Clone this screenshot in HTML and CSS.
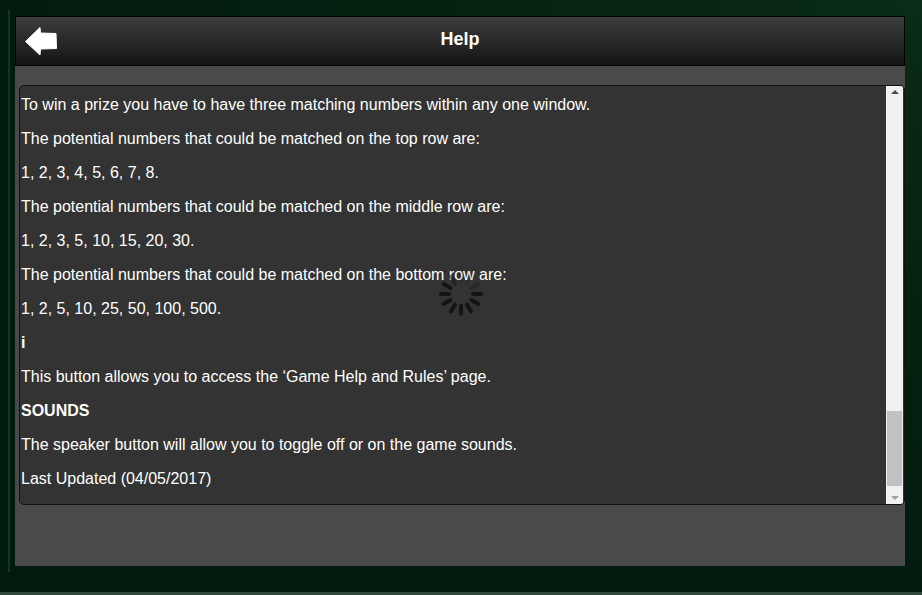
FILE: index.html
```html
<!DOCTYPE html>
<html>
<head>
<meta charset="utf-8">
<link rel="stylesheet" href="styles.css">
</head>
<body>
<div class="frame">
  <div class="edge-line"></div>
  <div class="panel">
    <header class="topbar">
      <button class="back" aria-label="Back">
        <svg width="32" height="29" viewBox="0 0 32 29"><path d="M0.5 14.5 L15 0.5 L15.5 6 L31 6.5 L31.5 21.5 L15.5 22 L15 28 Z" fill="#fff" stroke="#fff" stroke-width="1" stroke-linejoin="round"/></svg>
      </button>
      <h1 class="title">Help</h1>
    </header>
    <div class="body">
      <div class="content">
        <div class="text">
          <p>To win a prize you have to have three matching numbers within any one window.</p>
          <p>The potential numbers that could be matched on the top row are:</p>
          <p>1, 2, 3, 4, 5, 6, 7, 8.</p>
          <p>The potential numbers that could be matched on the middle row are:</p>
          <p>1, 2, 3, 5, 10, 15, 20, 30.</p>
          <p>The potential numbers that could be matched on the bottom row are:</p>
          <p>1, 2, 5, 10, 25, 50, 100, 500.</p>
          <p><b>i</b></p>
          <p>This button allows you to access the ‘Game Help and Rules’ page.</p>
          <p><b>SOUNDS</b></p>
          <p>The speaker button will allow you to toggle off or on the game sounds.</p>
          <p>Last Updated (04/05/2017)</p>
        </div>
        <div class="scrollbar">
          <div class="arrow up"></div>
          <div class="track"><div class="thumb"></div></div>
          <div class="arrow down"></div>
        </div>
        <div class="spinner">
          <i style="transform:rotate(0deg);opacity:.15"></i>
          <i style="transform:rotate(30deg);opacity:.15"></i>
          <i style="transform:rotate(60deg);opacity:.25"></i>
          <i style="transform:rotate(90deg);opacity:.9"></i>
          <i style="transform:rotate(120deg);opacity:.9"></i>
          <i style="transform:rotate(150deg);opacity:.9"></i>
          <i style="transform:rotate(180deg);opacity:.9"></i>
          <i style="transform:rotate(210deg);opacity:.9"></i>
          <i style="transform:rotate(240deg);opacity:.9"></i>
          <i style="transform:rotate(270deg);opacity:.9"></i>
          <i style="transform:rotate(300deg);opacity:.9"></i>
          <i style="transform:rotate(330deg);opacity:.5"></i>
        </div>
      </div>
    </div>
  </div>
  <div class="bottom-line"></div>
</div>
</body>
</html>
```

FILE: styles.css
```css
* { box-sizing: border-box; }
html, body { margin: 0; padding: 0; }
body {
  width: 922px;
  height: 595px;
  overflow: hidden;
  background: #001a0e;
  font-family: "Liberation Sans", Arial, sans-serif;
}
.frame {
  position: relative;
  width: 922px;
  height: 595px;
  padding: 16px 17px 0 15px;
  background: radial-gradient(ellipse at 100% 0%, #0a2c18 0%, #04200f 40%, #001a0e 80%);
}
.edge-line {
  position: absolute;
  left: 8px;
  top: 10px;
  width: 2px;
  height: 562px;
  background: #0b3a1f;
}
.bottom-line {
  position: absolute;
  left: 0;
  right: 0;
  bottom: 0;
  height: 3px;
  background: #2f4a3c;
}
.panel {
  width: 890px;
  height: 550px;
  background: #4a4a4a;
  display: flex;
  flex-direction: column;
}
.topbar {
  height: 50px;
  position: relative;
  display: flex;
  align-items: center;
  justify-content: center;
  padding-bottom: 4px;
  background: linear-gradient(#3d3d3d, #151515);
  border: 1px solid #000;
}
.back {
  position: absolute;
  left: 9px;
  top: 10px;
  padding: 0;
  border: 0;
  background: none;
  line-height: 0;
}
.title {
  margin: 0;
  color: #fff;
  font-size: 18px;
  font-weight: bold;
  font-family: "Liberation Sans", Arial, sans-serif;
}
.body {
  flex: 1;
  padding: 19px 0 0 4px;
}
.content {
  position: relative;
  height: 420px;
  background: #333;
  border: 1px solid #111;
  border-radius: 5px;
  overflow: hidden;
  display: flex;
}
.text {
  flex: 1;
  padding: 0 0 0 1px;
  color: #fff;
  font-size: 16px;
  line-height: 18px;
}
.text p { margin: 10px 0 16px; }
.text p + p { margin-top: 0; }
.scrollbar {
  width: 17px;
  margin: 0 1px 0 0;
  background: #f1f1f1;
  display: flex;
  flex-direction: column;
}
.arrow {
  height: 11px;
  position: relative;
}
.arrow.up::after, .arrow.down::after {
  content: "";
  position: absolute;
  left: 5px;
  border-left: 4px solid transparent;
  border-right: 4px solid transparent;
}
.arrow.up::after { top: 4px; border-bottom: 4px solid #505050; }
.arrow.down::after { top: 3px; border-top: 4px solid #a3a3a3; }
.track {
  flex: 1;
  position: relative;
  padding: 0 1px;
}
.thumb {
  position: absolute;
  left: 1px;
  right: 1px;
  top: 314px;
  height: 75px;
  background: #c1c1c1;
}
.spinner {
  position: absolute;
  left: 419px;
  top: 186px;
  width: 44px;
  height: 44px;
}
.spinner i {
  position: absolute;
  left: 20px;
  top: 0;
  width: 4px;
  height: 12px;
  border-radius: 2px;
  background: #111;
  transform-origin: 2px 22px;
}
```
